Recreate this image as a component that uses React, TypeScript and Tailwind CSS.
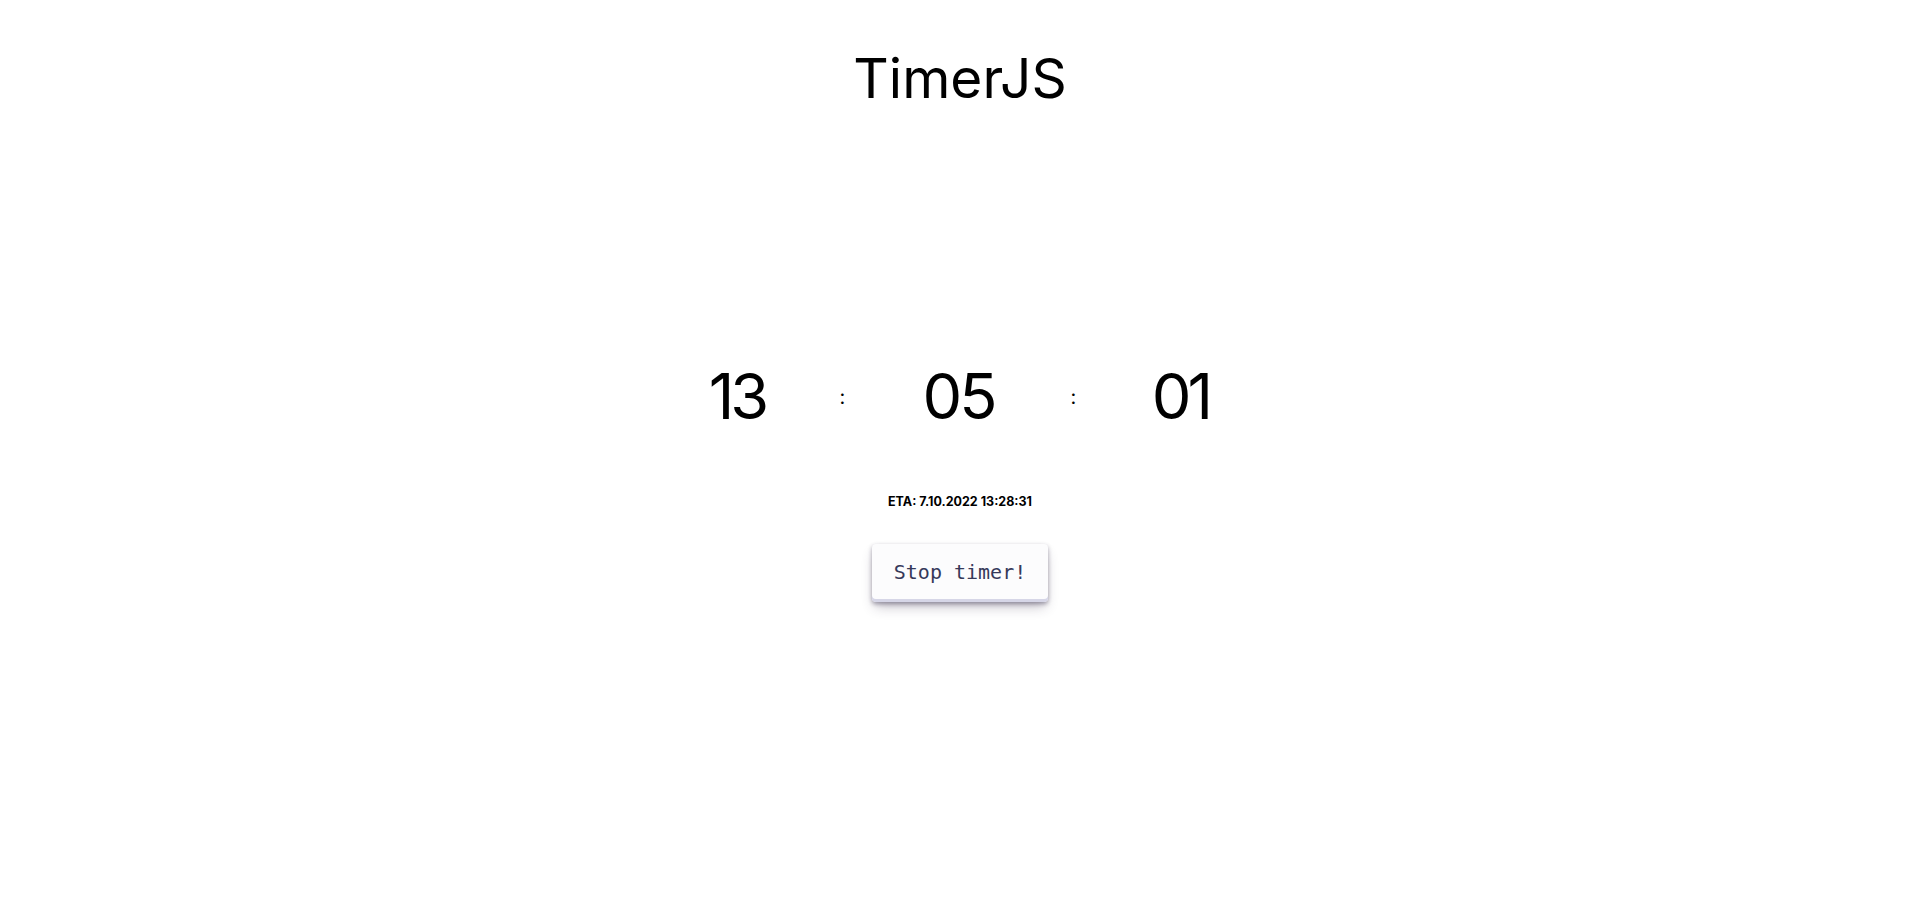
export default function App() {
    return (
        <div className="min-h-[922px] w-full bg-white text-black" style={{ fontFamily: "Inter, 'Noto Sans', sans-serif" }}>
            <div className="flex flex-col items-center">

                {/* Title */}
                <h1 className="pt-[51px] text-[55px] leading-none font-normal">TimerJS</h1>

                {/* Countdown */}
                <div className="mt-[259px] grid grid-cols-[100px_111px_121px_109px_105px] items-center">
                    <div className="text-center text-[63px] leading-none tracking-[-4px]">13</div>
                    <div className="text-center text-[20px] leading-none">:</div>
                    <div className="text-center text-[63px] leading-none tracking-[-3px]">05</div>
                    <div className="text-center text-[20px] leading-none">:</div>
                    <div className="text-center text-[63px] leading-none tracking-[-4px]">01</div>
                </div>

                {/* ETA */}
                <p className="mt-[68px] text-[12.5px] leading-none font-bold">ETA: 7.10.2022 13:28:31</p>

                {/* Stop button */}
                <button
                    className="mt-[35px] h-[58px] px-[22px] pb-[2px] rounded-[4px] bg-[#FCFCFD] text-[#36395A] text-[20px] leading-none [box-shadow:rgba(45,35,66,0.4)_0_2px_4px,rgba(45,35,66,0.3)_0_7px_13px_-3px,#D6D6E7_0_-3px_0_inset]"
                    style={{ fontFamily: "'DejaVu Sans Mono', monospace" }}
                >
                    Stop timer!
                </button>
            </div>
        </div>
    )
}
